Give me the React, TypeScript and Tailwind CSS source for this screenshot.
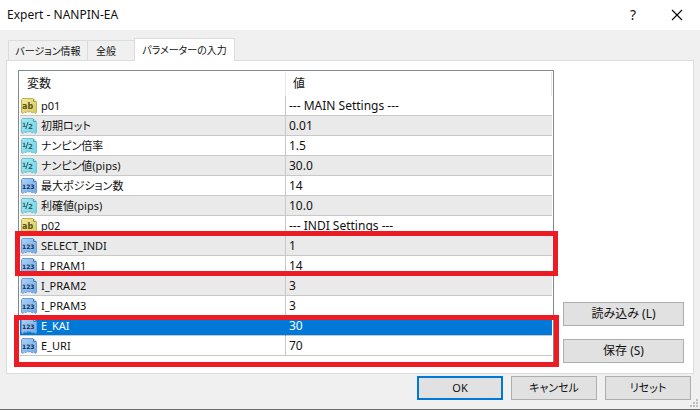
import React from 'react';
import clsx from 'clsx';

type ParamType = 'string' | 'double' | 'int';

interface Param {
  name: string;
  value: string;
  type: ParamType;
  selected?: boolean;
}

const params: Param[] = [
  { name: 'p01', value: '--- MAIN Settings ---', type: 'string' },
  { name: '初期ロット', value: '0.01', type: 'double' },
  { name: 'ナンピン倍率', value: '1.5', type: 'double' },
  { name: 'ナンピン値(pips)', value: '30.0', type: 'double' },
  { name: '最大ポジション数', value: '14', type: 'int' },
  { name: '利確値(pips)', value: '10.0', type: 'double' },
  { name: 'p02', value: '--- INDI Settings ---', type: 'string' },
  { name: 'SELECT_INDI', value: '1', type: 'int' },
  { name: 'I_PRAM1', value: '14', type: 'int' },
  { name: 'I_PRAM2', value: '3', type: 'int' },
  { name: 'I_PRAM3', value: '3', type: 'int' },
  { name: 'E_KAI', value: '30', type: 'int', selected: true },
  { name: 'E_URI', value: '70', type: 'int' },
];

const iconStyles = {
  string: { from: '#f1eaa0', to: '#d8c95f', edge: '#c0b04c', fold: '#a8983a', ink: '#5c5218' },
  double: { from: '#a6e6f0', to: '#78d3e3', edge: '#6cc3d4', fold: '#4aa6ba', ink: '#1d6575' },
  int: { from: '#acd0f5', to: '#74abe2', edge: '#6a9fd6', fold: '#4580bd', ink: '#0f2f5c' },
};

function TypeIcon({ type }: { type: ParamType }) {
  const s = iconStyles[type];
  const id = `fill-${type}`;
  return (
    <svg width="16" height="16" viewBox="0 0 16 16" className="shrink-0" aria-hidden="true">
      <defs>
        <linearGradient id={id} x1="0" y1="0" x2="1" y2="1">
          <stop offset="0" stopColor={s.from} />
          <stop offset="1" stopColor={s.to} />
        </linearGradient>
      </defs>
      <path
        d="M1.5 .5H12L15.5 4V14.5L14 15.5L12.5 14L11 15L9.5 13.2L8 14.2L6.5 13.2L5 14.8L3.5 13.8L2 15.5L.5 14.5V1.5Z"
        fill={`url(#${id})`}
        stroke={s.edge}
      />
      <path d="M12.5 1V3.5H15Z" fill={s.from} />
      <path d="M12.5 1V3.5H15" fill="none" stroke={s.fold} />
      <g fill={s.ink} fontFamily="'DejaVu Sans', sans-serif" fontWeight="bold">
        {type === 'string' && <text x="1" y="11" fontSize="8">ab</text>}
        {type === 'int' && <text x="1" y="11" fontSize="6">123</text>}
        {type === 'double' && (
          <>
            <text x="1" y="9" fontSize="6">1</text>
            <path d="M4.8 11L7 4" stroke={s.ink} />
            <text x="7" y="11" fontSize="7">2</text>
          </>
        )}
      </g>
    </svg>
  );
}

function DialogButton({ children, primary, wide }: { children: React.ReactNode; primary?: boolean; wide?: boolean }) {
  return (
    <button
      type="button"
      className={clsx(
        'h-6 bg-[#e1e1e1] leading-4 whitespace-nowrap',
        wide ? 'w-full' : 'w-[86px]',
        primary ? 'border-2 border-[#0078d7]' : 'border border-[#adadad]'
      )}
    >
      {children}
    </button>
  );
}

export default function App() {
  return (
    <div className="min-h-screen flex flex-col bg-[#f0f0f0] border-b border-[#6e6e6e] font-['Noto_Sans','Noto_Sans_CJK_JP',sans-serif] text-[12px] leading-4 text-[#111111] [font-feature-settings:'palt']">
      <header className="h-[30px] bg-white flex items-center justify-between pl-[7px] pr-[17px]">
        <h1>Expert - NANPIN-EA</h1>
        <div className="flex items-center gap-8">
          <button type="button" aria-label="Help" className="w-3 text-[14px]">?</button>
          <button type="button" aria-label="Close">
            <svg width="12" height="12" viewBox="0 0 12 12" stroke="black" strokeWidth="1.1">
              <path d="M1 1L11 11M11 1L1 11" />
            </svg>
          </button>
        </div>
      </header>

      <main className="px-[6px] pt-2">
        <div role="tablist" className="flex items-end pl-[2px] text-[10px]">
          <button type="button" role="tab" className="h-5 w-20 border border-b-0 border-[#dcdcdc] whitespace-nowrap">
            バージョン情報
          </button>
          <button type="button" role="tab" className="h-5 w-[46px] pl-2 text-left border-t border-[#dcdcdc]">
            全般
          </button>
          <button
            type="button"
            role="tab"
            aria-selected="true"
            className="relative z-10 h-[23px] w-[101px] -mb-px bg-white border border-b-0 border-[#dcdcdc] whitespace-nowrap"
          >
            パラメーターの入力
          </button>
        </div>

        <section className="bg-white border border-[#dcdcdc] pl-[11px] pr-[9px] pt-[9px] pb-[10px] flex items-end gap-[9px]">
          <div className="relative flex-1 border border-[#828790] p-px pb-[6px]">
            <table className="w-full table-fixed border-separate border-spacing-0 text-left">
              <colgroup>
                <col className="w-1/2" />
                <col className="w-1/2" />
              </colgroup>
              <thead>
                <tr className="h-6">
                  <th className="p-0 pl-[7px] font-normal border-r border-[#e5e5e5]">変数</th>
                  <th className="p-0 pl-[7px] font-normal border-r border-[#e5e5e5]">値</th>
                </tr>
              </thead>
              <tbody>
                {params.map((p, index) => (
                  <tr
                    key={p.name}
                    className={clsx(
                      'h-5',
                      p.selected ? 'bg-[#0078d7] text-white' : index % 2 ? 'bg-[#eaeaea]' : 'bg-white'
                    )}
                  >
                    <td
                      className={clsx(
                        'p-0 pl-px border-r border-b border-b-[#c8c8c8]',
                        p.selected ? 'border-r-[#0078d7]' : 'border-r-[#c8c8c8]'
                      )}
                    >
                      <div className="flex items-center gap-1 whitespace-nowrap">
                        <TypeIcon type={p.type} />
                        <span className="text-[11px]">{p.name}</span>
                      </div>
                    </td>
                    <td className="p-0 pl-[3px] border-b border-[#c8c8c8]">{p.value}</td>
                  </tr>
                ))}
              </tbody>
            </table>

            {/* highlighted parameter groups */}
            <div className="absolute -left-1 -right-[5px] top-40 h-[45px] border-[5px] border-[#ed1c24]" />
            <div className="absolute -left-[5px] -right-[6px] top-[244px] h-[52px] border-[5px] border-[#ed1c24]" />
          </div>

          <div className="w-[121px] flex flex-col gap-[13px]">
            <DialogButton wide>読み込み (L)</DialogButton>
            <DialogButton wide>保存 (S)</DialogButton>
          </div>
        </section>
      </main>

      <footer className="relative flex-1 flex items-start justify-end gap-2 pt-[2px] pr-[9px] pb-2 text-[11px]">
        <DialogButton primary>OK</DialogButton>
        <DialogButton>キャンセル</DialogButton>
        <DialogButton>リセット</DialogButton>
        <svg width="9" height="9" viewBox="0 0 9 9" className="absolute right-px bottom-px" fill="#bfbfbf" aria-hidden="true">
          <path d="M6 0h2v2H6zM3 3h2v2H3zM6 3h2v2H6zM0 6h2v2H0zM3 6h2v2H3zM6 6h2v2H6z" />
        </svg>
      </footer>
    </div>
  );
}
